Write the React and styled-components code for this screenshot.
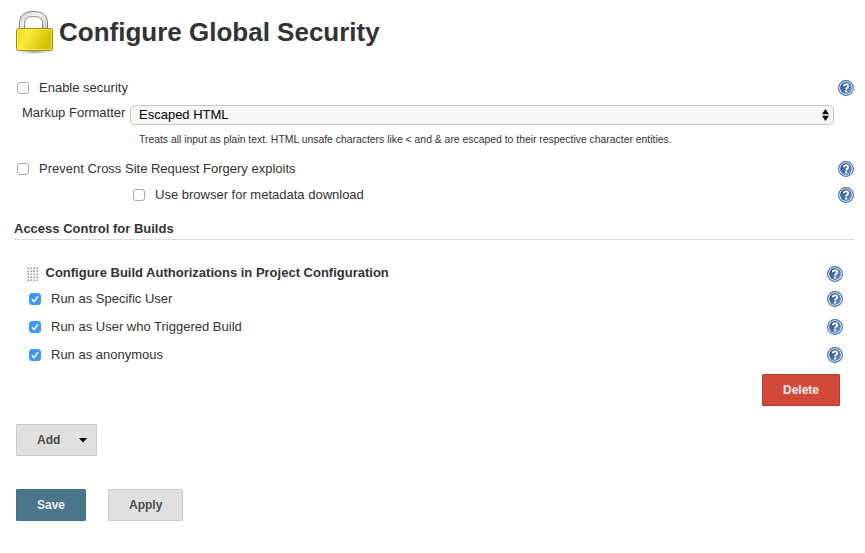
import React from 'react';
import styled, { createGlobalStyle, css } from 'styled-components';

const GlobalStyle = createGlobalStyle`
  *, *::before, *::after { box-sizing: border-box; }
  body {
    margin: 0;
    background: #fff;
    color: #333;
    font: 13px/20px "Liberation Sans", Arial, Helvetica, sans-serif;
  }
`;

const Page = styled.main`
  width: 865px;
  height: 553px;
  padding: 10px 11px 0 14px;
  overflow: hidden;
`;

const Header = styled.header`
  display: flex;
  height: 68px;
`;

const Title = styled.h1`
  margin: 6px 0 0 -3px;
  font-size: 26px;
  line-height: 32px;
  white-space: nowrap;
`;

const Row = styled.div`
  display: flex;
  align-items: center;
  height: 20px;
  margin-top: ${({ $gap = 0 }) => $gap}px;
  padding-left: ${({ $indent = 3 }) => $indent}px;
  padding-right: ${({ $inset = 0 }) => $inset}px;
`;

const Label = styled.label`
  flex: 1;
  display: flex;
  align-items: center;
  gap: 10px;
`;

const Checkbox = styled.input.attrs({ type: 'checkbox' })`
  appearance: none;
  flex: none;
  width: 12px;
  height: 12px;
  margin: 0;
  border: 1px solid #aaa;
  border-radius: 3px;
  background: #fff;
  &:checked {
    border-color: #3b99fc;
    background: #3b99fc url("data:image/svg+xml,%3Csvg xmlns='http://www.w3.org/2000/svg' viewBox='0 0 10 10'%3E%3Cpath d='M2 5.4 4.2 7.6 7.9 2.2' fill='none' stroke='white' stroke-width='1.6'/%3E%3C/svg%3E") center / 10px no-repeat;
  }
`;

const FieldLabel = styled.label`
  width: 108px;
  margin-top: -4px;
`;

const SelectBox = styled.div`
  display: flex;
  align-items: center;
  justify-content: space-between;
  width: 704px;
  height: 20px;
  padding: 0 4px 1px 8px;
  border: 1px solid #c6c6c6;
  border-radius: 5px;
  background: #f7f7f7;
  color: #000;
`;

const Hint = styled.p`
  margin: 5px 0 0 125px;
  height: 19px;
  font-size: 10.4px;
  line-height: 19px;
  white-space: nowrap;
`;

const SectionTitle = styled.h2`
  height: 21px;
  margin: 14px 0 0;
  border-bottom: 1px solid #ddd;
  font-size: 13px;
  line-height: 20px;
`;

const BlockTitle = styled.h3`
  flex: 1;
  margin: -2px 0 0 6.5px;
  font-size: 13px;
`;

const ButtonBar = styled.div`
  display: flex;
  gap: 22px;
  justify-content: ${({ $end }) => ($end ? 'flex-end' : 'flex-start')};
  margin-top: ${({ $gap }) => $gap}px;
  padding: 0 ${({ $end }) => ($end ? 14 : 0)}px 0 2px;
`;

const tones = {
  plain: css`background: #e0e0e0; border-color: #ccc; color: #4d4d4d;`,
  primary: css`background: #4b758b; border-color: #437387; color: #eee;`,
  danger: css`background: #d24939; border-color: #b93b2e; color: #eee;`,
};

const Button = styled.button`
  display: flex;
  align-items: center;
  gap: 19px;
  height: 32px;
  margin: 0;
  padding: 0 ${({ $trail = 20 }) => $trail}px 0 20px;
  width: ${({ $width }) => $width}px;
  border: 1px solid;
  border-radius: 1px;
  font: bold 12px/30px "Liberation Sans", Arial, sans-serif;
  ${({ $tone = 'plain' }) => tones[$tone]}
`;

const Icon = styled.svg`
  display: block;
  flex: none;
`;

const Lock = () => (
  <Icon width="48" height="48" viewBox="0 0 48 48">
    <defs>
      <linearGradient id="body" x1="0" x2="1" y1="0" y2=".3">
        <stop offset="0" stopColor="#e6d51f" />
        <stop offset=".35" stopColor="#fbea3c" />
        <stop offset="1" stopColor="#d5bd00" />
      </linearGradient>
      <linearGradient id="shackle" x1="0" x2="1" y1="0" y2="1">
        <stop offset="0" stopColor="#c6c9c4" />
        <stop offset=".4" stopColor="#f1f2ef" />
        <stop offset="1" stopColor="#c4c7c2" />
      </linearGradient>
      <radialGradient id="shadow">
        <stop offset="0" stopColor="#000" stopOpacity=".45" />
        <stop offset="1" stopColor="#000" stopOpacity="0" />
      </radialGradient>
    </defs>
    <ellipse cx="20.500" cy="40.500" rx="18" ry="4" fill="url(#shadow)" />
    <path d="M5.500 20V13C5.500 5.500 10 1.500 19.500 1.500S33.500 5.500 33.500 13V20H28.500V13.500C28.500 8.500 26 6.500 19.500 6.500S10.500 8.500 10.500 13.500V20Z" fill="url(#shackle)" stroke="#858883" />
    <rect x="2.500" y="18.500" width="36" height="22" rx="2" fill="url(#body)" stroke="#a48c00" />
    <rect x="3.500" y="19.500" width="34" height="20" rx="1" fill="none" stroke="#fff892" strokeOpacity=".5" />
  </Icon>
);

const Help = () => (
  <Icon width="16" height="16" viewBox="0 0 16 16" role="img" aria-label="Help">
    <defs>
      <linearGradient id="disc" x1="0" x2="1" y1="0" y2="1">
        <stop offset="0" stopColor="#204a87" />
        <stop offset="1" stopColor="#6f9bd0" />
      </linearGradient>
    </defs>
    <circle cx="8" cy="8" r="7.400" fill="#fff" stroke="#3f6ba6" strokeWidth="1.100" />
    <circle cx="8" cy="8" r="5.900" fill="url(#disc)" />
    <path d="M5.800 6.300C5.800 3.700 10.200 3.700 10.200 6.100C10.200 7.700 8.100 7.800 8.100 9.500" fill="none" stroke="#fff" strokeWidth="1.900" />
    <rect x="7.100" y="10.500" width="2" height="2" fill="#fff" />
  </Icon>
);

const Grip = () => (
  <Icon width="12" height="15" viewBox="0 0 12 15">
    <defs>
      <pattern id="dots" width="3" height="3" patternUnits="userSpaceOnUse">
        <path d="M0 1h1V0h1v2H0z" fill="#b4b0aa" />
      </pattern>
    </defs>
    <rect width="12" height="15" fill="url(#dots)" />
  </Icon>
);

const CheckRow = ({ label, checked, ...place }) => (
  <Row {...place}>
    <Label><Checkbox defaultChecked={checked} />{label}</Label>
    <Help />
  </Row>
);

export default function App() {
  return (
    <Page>
      <GlobalStyle />
      <Header>
        <Lock />
        <Title>Configure Global Security</Title>
      </Header>
      <CheckRow label="Enable security" />
      <Row $gap={7} $indent={8}>
        <FieldLabel>Markup Formatter</FieldLabel>
        <SelectBox>
          Escaped HTML
          <Icon width="7" height="12" viewBox="0 0 7 12"><path d="M0 5.300 3.500 0 7 5.300ZM0 6.700 3.500 12 7 6.700Z" /></Icon>
        </SelectBox>
      </Row>
      <Hint>Treats all input as plain text. HTML unsafe characters like &lt; and &amp; are escaped to their respective character entities.</Hint>
      <CheckRow $gap={10} label="Prevent Cross Site Request Forgery exploits" />
      <CheckRow $gap={6} $indent={119} label="Use browser for metadata download" />
      <SectionTitle>Access Control for Builds</SectionTitle>
      <Row $gap={24} $indent={13} $inset={11}>
        <Grip />
        <BlockTitle>Configure Build Authorizations in Project Configuration</BlockTitle>
        <Help />
      </Row>
      <CheckRow $gap={5} $indent={15} $inset={11} checked label="Run as Specific User" />
      <CheckRow $gap={8} $indent={15} $inset={11} checked label="Run as User who Triggered Build" />
      <CheckRow $gap={8} $indent={15} $inset={11} checked label="Run as anonymous" />
      <ButtonBar $gap={9} $end>
        <Button $tone="danger" $width={78}>Delete</Button>
      </ButtonBar>
      <ButtonBar $gap={18}>
        <Button $width={81} $trail={8}>
          Add
          <Icon width="8" height="5" viewBox="0 0 8 5"><path d="M0 0H8L4 4.500Z" fill="#000" /></Icon>
        </Button>
      </ButtonBar>
      <ButtonBar $gap={33}>
        <Button $tone="primary" $width={70}>Save</Button>
        <Button $width={75}>Apply</Button>
      </ButtonBar>
    </Page>
  );
}
